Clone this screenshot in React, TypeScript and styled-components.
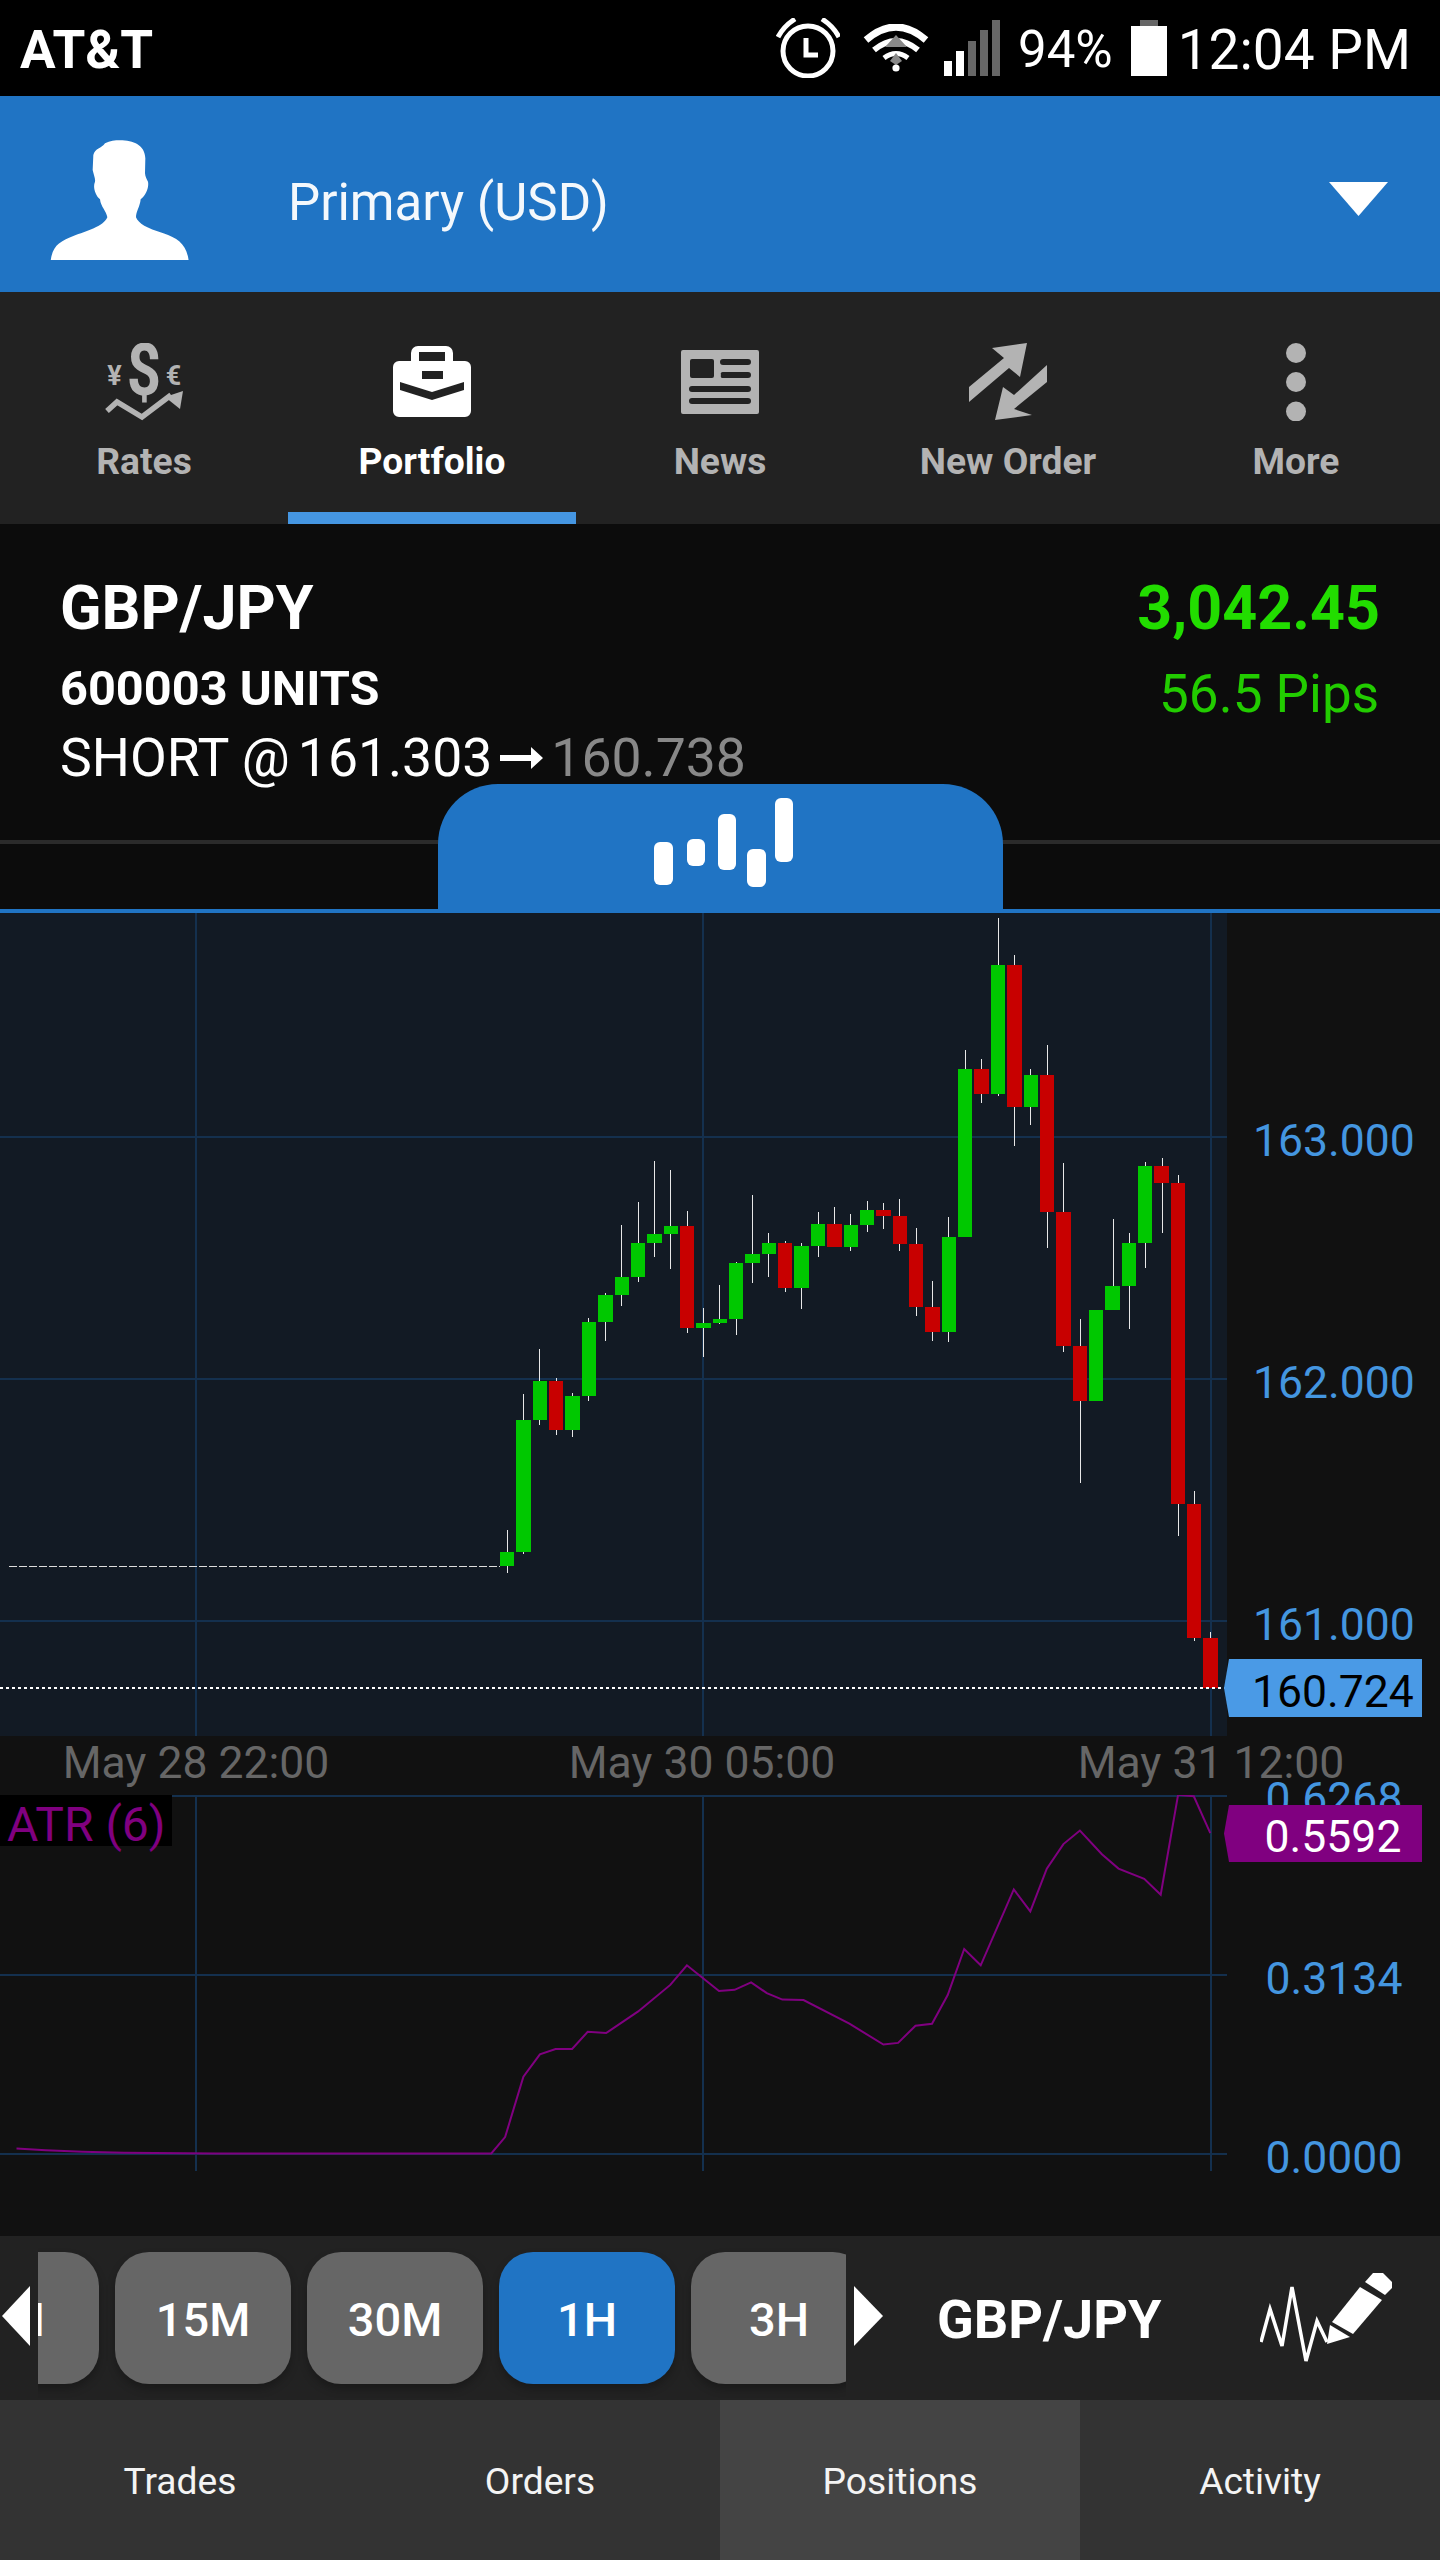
import React from 'react';
import styled, { createGlobalStyle } from 'styled-components';

const Global = createGlobalStyle`
  html, body { margin: 0; padding: 0; background: #0c0c0c; }
  * { box-sizing: border-box; }
  body { font-family: Roboto, "Liberation Sans", sans-serif; }
`;

const Page = styled.div`
  width: 1440px;
  height: 2560px;
  overflow: hidden;
  display: flex;
  flex-direction: column;
  background: #0c0c0c;
  color: #fff;
`;

const StatusBar = styled.header`
  height: 96px;
  background: #000;
  display: flex;
  align-items: center;
  padding: 0 29px 0 20px;
`;
const Carrier = styled.span`
  font-size: 53px;
  font-weight: 700;
  line-height: 52px;
  flex: 1;
  margin-top: 4px;
`;
const StatusIcon = styled.svg<{ $gap?: number }>`
  display: block;
  flex: none;
  margin-left: ${p => p.$gap ?? 0}px;
`;
const StatusText = styled.span<{ $size: number; $gap: number }>`
  font-size: ${p => p.$size}px;
  line-height: 56px;
  margin-left: ${p => p.$gap}px;
  margin-top: 4px;
`;

const AccountBar = styled.div`
  height: 196px;
  background: #2074c4;
  display: flex;
  align-items: center;
  padding: 0 52px 0 50px;
`;
const Person = styled.svg`
  display: block;
  margin-top: 12px;
`;
const AccountName = styled.span`
  font-size: 51px;
  line-height: 60px;
  margin: 18px 0 0 98px;
  flex: 1;
  color: #f4f8fc;
`;
const AccountCaret = styled.svg`
  display: block;
  margin-top: 10px;
`;

const Nav = styled.nav`
  height: 232px;
  background: #222;
  display: grid;
  grid-template-columns: repeat(5, 288px);
`;
const NavItem = styled.div<{ $active?: boolean }>`
  display: flex;
  flex-direction: column;
  align-items: center;
  position: relative;
  padding-top: 51px;
  color: ${p => (p.$active ? '#fff' : '#b3b3b3')};
  border-bottom: 12px solid ${p => (p.$active ? '#4596e2' : 'transparent')};
`;
const NavIcon = styled.svg`
  display: block;
  flex: none;
`;
const NavLabel = styled.span`
  font-size: 37.2px;
  font-weight: 700;
  line-height: 40px;
  margin-top: 20px;
`;

const Info = styled.section`
  height: 260px;
  display: flex;
  justify-content: space-between;
  padding: 54px 60px 0 60px;
`;
const InfoColumn = styled.div<{ $right?: boolean }>`
  display: flex;
  flex-direction: column;
  align-items: ${p => (p.$right ? 'flex-end' : 'flex-start')};
`;
const Pair = styled.div`
  font-size: 61px;
  font-weight: 700;
  line-height: 61px;
`;
const Units = styled.div`
  font-size: 48.7px;
  font-weight: 700;
  line-height: 49px;
  margin-top: 25px;
`;
const Entry = styled.div`
  font-size: 53.5px;
  line-height: 54px;
  margin-top: 18px;
  display: flex;
  align-items: center;
  white-space: pre;
`;
const At = styled.span`
  margin-right: 8px;
`;
const Grey = styled.span`
  color: #888;
`;
const EntryArrow = styled.svg`
  display: block;
  margin: 0 8px 0 8px;
`;
const Profit = styled.div`
  font-size: 61px;
  font-weight: 700;
  line-height: 61px;
  color: #22dd00;
`;
const Pips = styled.div`
  font-size: 53px;
  line-height: 54px;
  margin: 28px 1px 0 0;
  color: #22cc00;
`;

const Handle = styled.div`
  height: 129px;
  display: flex;
  justify-content: center;
  position: relative;
  border-bottom: 4px solid #2074c4;
  padding-left: 1px;
  &::before {
    content: '';
    position: absolute;
    left: 0;
    right: 0;
    top: 56px;
    height: 4px;
    background: #2b2b2b;
  }
`;
const HandleTab = styled.div`
  position: relative;
  width: 565px;
  height: 125px;
  background: #2074c4;
  border-radius: 60px 60px 0 0;
  display: flex;
  justify-content: center;
`;

const ChartRow = styled.div<{ $h: number }>`
  height: ${p => p.$h}px;
  display: flex;
  flex: none;
  background: #111;
`;
const Pane = styled.div<{ $bg: string }>`
  width: 1227px;
  height: 100%;
  background: ${p => p.$bg};
  position: relative;
  flex: none;
`;
const PaneSvg = styled.svg`
  display: block;
`;
const Axis = styled.div`
  flex: 1;
  position: relative;
`;
const AxisLabel = styled.span<{ $y: number }>`
  position: absolute;
  left: 1px;
  right: 0;
  top: ${p => p.$y - 26}px;
  text-align: center;
  font-size: 44.5px;
  line-height: 52px;
  color: #4496e0;
`;
const PriceTag = styled.div<{ $y: number; $bg: string; $fg: string; $h: number }>`
  position: absolute;
  left: -3px;
  top: ${p => p.$y}px;
  width: 198px;
  height: ${p => p.$h}px;
  background: ${p => p.$bg};
  color: ${p => p.$fg};
  clip-path: polygon(5px 0, 100% 0, 100% 100%, 5px 100%, 0 50%);
  font-size: 44.5px;
  line-height: ${p => p.$h + 8}px;
  text-align: center;
  padding-left: 20px;
`;
const TimeAxis = styled.div`
  height: 59px;
  flex: none;
  background: #111;
  display: grid;
  grid-template-columns: 392px 620px 398px;
`;
const TimeLabel = styled.span`
  text-align: center;
  font-size: 44.5px;
  line-height: 54px;
  color: #666;
`;
const StudyLabel = styled.div`
  position: absolute;
  left: 0;
  top: 0;
  width: 172px;
  height: 51px;
  padding-left: 7px;
  background: #000;
  color: #800080;
  font-size: 48px;
  line-height: 60px;
  white-space: nowrap;
`;

const Toolbar = styled.div`
  height: 164px;
  flex: none;
  background: #222;
  display: flex;
  align-items: center;
  padding-left: 2px;
`;
const Chevron = styled.svg<{ $gap: number }>`
  display: block;
  flex: none;
  margin-left: ${p => p.$gap}px;
  margin-bottom: 5px;
`;
const Scroller = styled.div`
  width: 808px;
  height: 164px;
  margin-left: 8px;
  overflow: hidden;
  flex: none;
`;
const ScrollRow = styled.div`
  display: flex;
  gap: 16px;
  margin-left: -115px;
  padding-top: 16px;
`;
const Interval = styled.div<{ $active?: boolean }>`
  flex: none;
  width: 176px;
  height: 132px;
  border-radius: 34px;
  background: ${p => (p.$active ? '#2074c4' : '#666')};
  box-shadow: 0 5px 8px rgba(0, 0, 0, 0.25);
  font-size: 47px;
  font-weight: 500;
  line-height: 135px;
  text-align: center;
`;
const ToolbarPair = styled.div`
  font-size: 54px;
  font-weight: 700;
  line-height: 60px;
  margin: 3px 0 0 54px;
  width: 227px;
  white-space: nowrap;
`;
const PenIcon = styled.svg`
  display: block;
  margin-left: 96px;
`;

const Tabs = styled.div`
  height: 160px;
  flex: none;
  background: #333;
  display: grid;
  grid-template-columns: repeat(4, 360px);
`;
const Tab = styled.div<{ $active?: boolean }>`
  background: ${p => (p.$active ? '#444' : 'transparent')};
  font-size: 37.2px;
  line-height: 162px;
  text-align: center;
  color: #f4f4f4;
`;

type C = [number, number, number, number, number, number, number, 'g' | 'r'];
const candles: C[] = [
  [500, 514, 1552, 1566, 507, 1530, 1573, 'g'],
  [516, 531, 1420, 1552, 523, 1394, 1554, 'g'],
  [533, 547, 1381, 1420, 539, 1349, 1425, 'g'],
  [549, 563, 1381, 1430, 556, 1378, 1435, 'r'],
  [565, 580, 1396, 1430, 572, 1393, 1437, 'g'],
  [582, 596, 1322, 1396, 588, 1318, 1401, 'g'],
  [598, 613, 1295, 1322, 605, 1293, 1341, 'g'],
  [615, 629, 1277, 1295, 621, 1225, 1306, 'g'],
  [631, 645, 1243, 1277, 638, 1202, 1282, 'g'],
  [647, 662, 1234, 1243, 654, 1161, 1257, 'g'],
  [664, 678, 1226, 1234, 670, 1170, 1269, 'g'],
  [680, 694, 1226, 1328, 687, 1211, 1333, 'r'],
  [696, 711, 1323, 1328, 703, 1308, 1357, 'g'],
  [713, 727, 1319, 1323, 719, 1285, 1324, 'g'],
  [729, 743, 1263, 1319, 736, 1262, 1335, 'g'],
  [745, 760, 1254, 1263, 752, 1195, 1283, 'g'],
  [762, 776, 1243, 1254, 768, 1233, 1277, 'g'],
  [778, 792, 1243, 1288, 785, 1241, 1292, 'r'],
  [794, 809, 1246, 1288, 801, 1243, 1309, 'g'],
  [811, 825, 1224, 1246, 818, 1212, 1257, 'g'],
  [827, 842, 1224, 1247, 834, 1207, 1247, 'r'],
  [844, 858, 1225, 1247, 850, 1214, 1251, 'g'],
  [860, 874, 1210, 1225, 867, 1201, 1232, 'g'],
  [876, 891, 1210, 1216, 883, 1203, 1229, 'r'],
  [893, 907, 1216, 1244, 899, 1199, 1251, 'r'],
  [909, 923, 1244, 1307, 916, 1228, 1316, 'r'],
  [925, 940, 1307, 1332, 932, 1281, 1341, 'r'],
  [942, 956, 1237, 1332, 948, 1217, 1342, 'g'],
  [958, 972, 1069, 1237, 965, 1050, 1237, 'g'],
  [974, 989, 1069, 1094, 981, 1059, 1103, 'r'],
  [991, 1005, 965, 1094, 998, 918, 1096, 'g'],
  [1007, 1022, 965, 1107, 1014, 955, 1146, 'r'],
  [1024, 1038, 1075, 1107, 1030, 1069, 1125, 'g'],
  [1040, 1054, 1075, 1212, 1047, 1045, 1248, 'r'],
  [1056, 1071, 1212, 1346, 1063, 1163, 1352, 'r'],
  [1073, 1087, 1346, 1401, 1080, 1319, 1483, 'r'],
  [1089, 1103, 1310, 1401, 1096, 1310, 1401, 'g'],
  [1105, 1120, 1286, 1310, 1113, 1219, 1310, 'g'],
  [1122, 1136, 1243, 1286, 1129, 1233, 1329, 'g'],
  [1138, 1152, 1166, 1243, 1145, 1162, 1268, 'g'],
  [1154, 1169, 1166, 1183, 1162, 1158, 1233, 'r'],
  [1171, 1185, 1183, 1504, 1178, 1175, 1536, 'r'],
  [1187, 1201, 1504, 1638, 1194, 1491, 1641, 'r'],
  [1203, 1218, 1638, 1688, 1210, 1632, 1688, 'r'],
];

const atrZoom: [number, number][] = [
  [18, 1491], [50, 1495], [90, 1499], [135, 1501], [235, 1503], [535, 1503], [550, 1463], [570, 1315], [588, 1260],
  [605, 1247], [623, 1247], [640, 1205], [660, 1208], [695, 1155], [730, 1090], [748, 1042], [783, 1105], [800, 1102],
  [818, 1084], [835, 1110], [852, 1126], [875, 1127], [925, 1185], [962, 1236], [978, 1232], [997, 1190], [1015, 1185],
  [1032, 1115], [1050, 1002], [1068, 1042], [1104, 856], [1122, 910], [1140, 805], [1158, 745], [1176, 712], [1200, 770],
  [1218, 805], [1246, 830], [1264, 869], [1283, 624], [1300, 628], [1318, 718],
];
const atrPoints = atrZoom.map(([x, y]) => `${(x / 1.089).toFixed(1)},${(1540 + y / 2.45).toFixed(1)}`).join(' ');

const GRID = '#14304e';

const App = () => (
  <Page>
    <Global />
    <StatusBar>
      <Carrier>AT&amp;T</Carrier>
      <StatusIcon width="64" height="60" viewBox="777 18 64 60">
        <ellipse cx="809" cy="51" rx="25" ry="25" fill="none" stroke="#fff" strokeWidth="5" />
        <path d="M807 38v17h12" fill="none" stroke="#fff" strokeWidth="5" />
        <path d="M779 37q6-11 17-18M823 19q11 7 17 18" fill="none" stroke="#fff" strokeWidth="5" />
      </StatusIcon>
      <StatusIcon $gap={23} width="67" height="48" viewBox="864 22 67 48">
        <path d="M867 38q30-26 60 0" fill="none" stroke="#fff" strokeWidth="7" />
        <path d="M875 48q22-18 44 0" fill="none" stroke="#fff" strokeWidth="6" />
        <path d="M897 33l11 12h-22z" fill="#888" />
        <path d="M885 56q12-9 24 0" fill="none" stroke="#fff" strokeWidth="5" />
        <path d="M897 51l6 8-6 4-6-4z" fill="#888" />
        <circle cx="897" cy="66" r="3.6" fill="#fff" />
      </StatusIcon>
      <StatusIcon $gap={14} width="56" height="56" viewBox="945 20 56 56">
        <rect x="945" y="61" width="8" height="15" fill="#fff" />
        <rect x="957" y="51" width="8" height="25" fill="#fff" />
        <rect x="969" y="41" width="8" height="35" fill="#666" />
        <rect x="981" y="30" width="8" height="46" fill="#666" />
        <rect x="993" y="20" width="8" height="56" fill="#666" />
      </StatusIcon>
      <StatusText $size={51} $gap={18}>94%</StatusText>
      <StatusIcon $gap={18} width="36" height="56" viewBox="1131 20 36 56">
        <rect x="1140" y="20" width="18" height="6" fill="#666" />
        <rect x="1131" y="26" width="36" height="50" fill="#fff" />
      </StatusIcon>
      <StatusText $size={55} $gap={11}>12:04 PM</StatusText>
    </StatusBar>

    <AccountBar>
      <Person width="140" height="120" viewBox="60 30 420 360">
        <path
          d="M270 31C310 31 345 45 346 85L345 130C346 140 350 148 354 155C357 170 350 195 332 208C330 230 318 245 318 262C325 280 350 295 400 310C445 325 470 345 476 392L62 392C68 345 90 335 130 318C170 303 220 290 232 262C230 245 212 230 210 208C195 195 188 170 195 155C197 148 190 130 188 120L190 75C195 55 215 55 225 40C240 32 255 31 270 31Z"
          fill="#fff"
        />
      </Person>
      <AccountName>Primary (USD)</AccountName>
      <AccountCaret width="59" height="34" viewBox="0 0 59 34">
        <path d="M0 0h59L29.500 34z" fill="#fff" />
      </AccountCaret>
    </AccountBar>

    <Nav>
      <NavItem>
        <NavIcon width="78" height="78" viewBox="105 343 78 78" fill="currentColor">
          <text transform="translate(144 395) scale(.82 1)" textAnchor="middle" fontFamily="Roboto" fontWeight="700" fontSize="73">$</text>
          <text x="114.500" y="385" textAnchor="middle" fontFamily="Roboto" fontWeight="700" fontSize="27">¥</text>
          <text x="173.500" y="385" textAnchor="middle" fontFamily="Roboto" fontWeight="700" fontSize="27">€</text>
          <path d="M107 411l10-9 25 15 29-22" fill="none" stroke="currentColor" strokeWidth="5.500" />
          <path d="M183 391l-3 18-15-12z" />
        </NavIcon>
        <NavLabel>Rates</NavLabel>
      </NavItem>
      <NavItem $active>
        <NavIcon width="78" height="78" viewBox="393 343 78 78" fill="#fff">
          <path
            fillRule="evenodd"
            d="M418 346h28a7 7 0 0 1 7 7v8h12a6 6 0 0 1 6 6v44a6 6 0 0 1-6 6h-66a6 6 0 0 1-6-6v-44a6 6 0 0 1 6-6h12v-8a7 7 0 0 1 7-7zm1 6v9h26v-9zM422 371v8h21v-8zM400 382v8l32 10 32-10v-8l-32 10z"
          />
        </NavIcon>
        <NavLabel>Portfolio</NavLabel>
      </NavItem>
      <NavItem>
        <NavIcon width="78" height="78" viewBox="681 343 78 78" fill="currentColor">
          <path
            fillRule="evenodd"
            d="M683 350h74a2 2 0 0 1 2 2v60a2 2 0 0 1-2 2h-74a2 2 0 0 1-2-2v-60a2 2 0 0 1 2-2zm9 9a2 2 0 0 0-2 2v15a2 2 0 0 0 2 2h20a2 2 0 0 0 2-2v-15a2 2 0 0 0-2-2zm31 0a2 2 0 0 0 0 6h25a2 2 0 0 0 0-6zm0 13a2 2 0 0 0-2 3 2 2 0 0 0 2 3h25a2 2 0 0 0 0-6zm-31 14a3 3 0 0 0 0 6h56a3 3 0 0 0 0-6zm0 12a3 3 0 0 0 0 6h56a3 3 0 0 0 0-6z"
          />
        </NavIcon>
        <NavLabel>News</NavLabel>
      </NavItem>
      <NavItem>
        <NavIcon width="78" height="78" viewBox="969 343 78 78" fill="currentColor">
          <path d="M992 348l35-5-7 34-11-9-40 34v-15l35-29z" />
          <path d="M1047 365v17l-33 27 18 6-37 5 8-33 11 8z" />
        </NavIcon>
        <NavLabel>New Order</NavLabel>
      </NavItem>
      <NavItem>
        <NavIcon width="78" height="78" viewBox="1257 343 78 78" fill="currentColor">
          <circle cx="1296" cy="353" r="10" />
          <circle cx="1296" cy="382" r="10" />
          <circle cx="1296" cy="411.500" r="10" />
        </NavIcon>
        <NavLabel>More</NavLabel>
      </NavItem>
    </Nav>

    <Info>
      <InfoColumn>
        <Pair>GBP/JPY</Pair>
        <Units>600003 UNITS</Units>
        <Entry>
          <At>SHORT @</At>161.303
          <EntryArrow width="43" height="28" viewBox="0 0 43 28">
            <path d="M0 11h31V3l12 11-12 11v-8H0z" fill="#fff" />
          </EntryArrow>
          <Grey>160.738</Grey>
        </Entry>
      </InfoColumn>
      <InfoColumn $right>
        <Profit>3,042.45</Profit>
        <Pips>56.5 Pips</Pips>
      </InfoColumn>
    </Info>

    <Handle>
      <HandleTab>
        <svg width="565" height="125" viewBox="438 784 565 125">
          <rect x="654" y="842" width="19" height="43" rx="6" fill="#fff" />
          <rect x="687" y="839" width="18" height="27" rx="6" fill="#fff" />
          <rect x="718" y="814" width="18" height="56" rx="6" fill="#fff" />
          <rect x="747" y="849" width="19" height="38" rx="6" fill="#fff" />
          <rect x="775" y="798" width="18" height="64" rx="6" fill="#fff" />
        </svg>
      </HandleTab>
    </Handle>

    <ChartRow $h={823}>
      <Pane $bg="#121a24">
        <PaneSvg width="1227" height="823" viewBox="0 913 1227 823">
          {[1137, 1379, 1621].map(y => (
            <rect key={y} x="0" y={y - 1} width="1227" height="2" fill={GRID} />
          ))}
          {[196, 703, 1211].map(x => (
            <rect key={x} x={x - 1} y="913" width="2" height="823" fill={GRID} />
          ))}
          <line x1="9" y1="1566.500" x2="500" y2="1566.500" stroke="#ddd" strokeWidth="1" strokeDasharray="8 2" />
          {candles.map(c => (
            <rect key={`w${c[0]}`} x={c[4]} y={c[5]} width="1" height={c[6] - c[5]} fill="#e8e8e8" />
          ))}
          {candles.map(c => (
            <rect key={`b${c[0]}`} x={c[0]} y={c[2]} width={c[1] - c[0]} height={c[3] - c[2]} fill={c[7] === 'g' ? '#00c800' : '#c80000'} />
          ))}
          <line x1="0" y1="1688" x2="1227" y2="1688" stroke="#fff" strokeWidth="2" strokeDasharray="3 3" />
        </PaneSvg>
      </Pane>
      <Axis>
        <AxisLabel $y={228}>163.000</AxisLabel>
        <AxisLabel $y={470}>162.000</AxisLabel>
        <AxisLabel $y={712}>161.000</AxisLabel>
        <PriceTag $y={746} $h={58} $bg="#4a9ae6" $fg="#000">160.724</PriceTag>
      </Axis>
    </ChartRow>

    <TimeAxis>
      <TimeLabel>May 28 22:00</TimeLabel>
      <TimeLabel>May 30 05:00</TimeLabel>
      <TimeLabel>May 31 12:00</TimeLabel>
    </TimeAxis>

    <ChartRow $h={441}>
      <Pane $bg="#111">
        <PaneSvg width="1227" height="441" viewBox="0 1795 1227 441">
          {[1796, 1975, 2154].map(y => (
            <rect key={y} x="0" y={y - 1} width="1227" height="2" fill={GRID} />
          ))}
          {[196, 703, 1211].map(x => (
            <rect key={x} x={x - 1} y="1795" width="2" height="376" fill={GRID} />
          ))}
          <polyline points={atrPoints} fill="none" stroke="#800080" strokeWidth="2" />
        </PaneSvg>
        <StudyLabel>ATR (6)</StudyLabel>
      </Pane>
      <Axis>
        <AxisLabel $y={4}>0.6268</AxisLabel>
        <AxisLabel $y={184}>0.3134</AxisLabel>
        <AxisLabel $y={363}>0.0000</AxisLabel>
        <PriceTag $y={10} $h={57} $bg="#800080" $fg="#fff">0.5592</PriceTag>
      </Axis>
    </ChartRow>

    <Toolbar>
      <Chevron width="28" height="60" viewBox="0 0 28 60" $gap={0}>
        <path d="M28 0v60L0 30z" fill="#fff" />
      </Chevron>
      <Scroller>
        <ScrollRow>
          <Interval>5M</Interval>
          <Interval>15M</Interval>
          <Interval>30M</Interval>
          <Interval $active>1H</Interval>
          <Interval>3H</Interval>
        </ScrollRow>
      </Scroller>
      <Chevron width="29" height="60" viewBox="0 0 29 60" $gap={8}>
        <path d="M0 0v60l29-30z" fill="#fff" />
      </Chevron>
      <ToolbarPair>GBP/JPY</ToolbarPair>
      <PenIcon width="133" height="92" viewBox="1260 2272 133 92">
        <polyline points="1261,2342 1270,2309 1282,2346 1292,2287 1306,2361 1317,2321 1327,2342" fill="none" stroke="#fff" strokeWidth="3.500" />
        <path d="M1330 2325l20 12-23 7z" fill="#fff" />
        <path d="M1360 2287l22 13-29 34-21-12z" fill="#fff" />
        <path d="M1365 2282l8-9h10l9 9v6l-7 7z" fill="#fff" />
      </PenIcon>
    </Toolbar>

    <Tabs>
      <Tab>Trades</Tab>
      <Tab>Orders</Tab>
      <Tab $active>Positions</Tab>
      <Tab>Activity</Tab>
    </Tabs>
  </Page>
);

export default App;
